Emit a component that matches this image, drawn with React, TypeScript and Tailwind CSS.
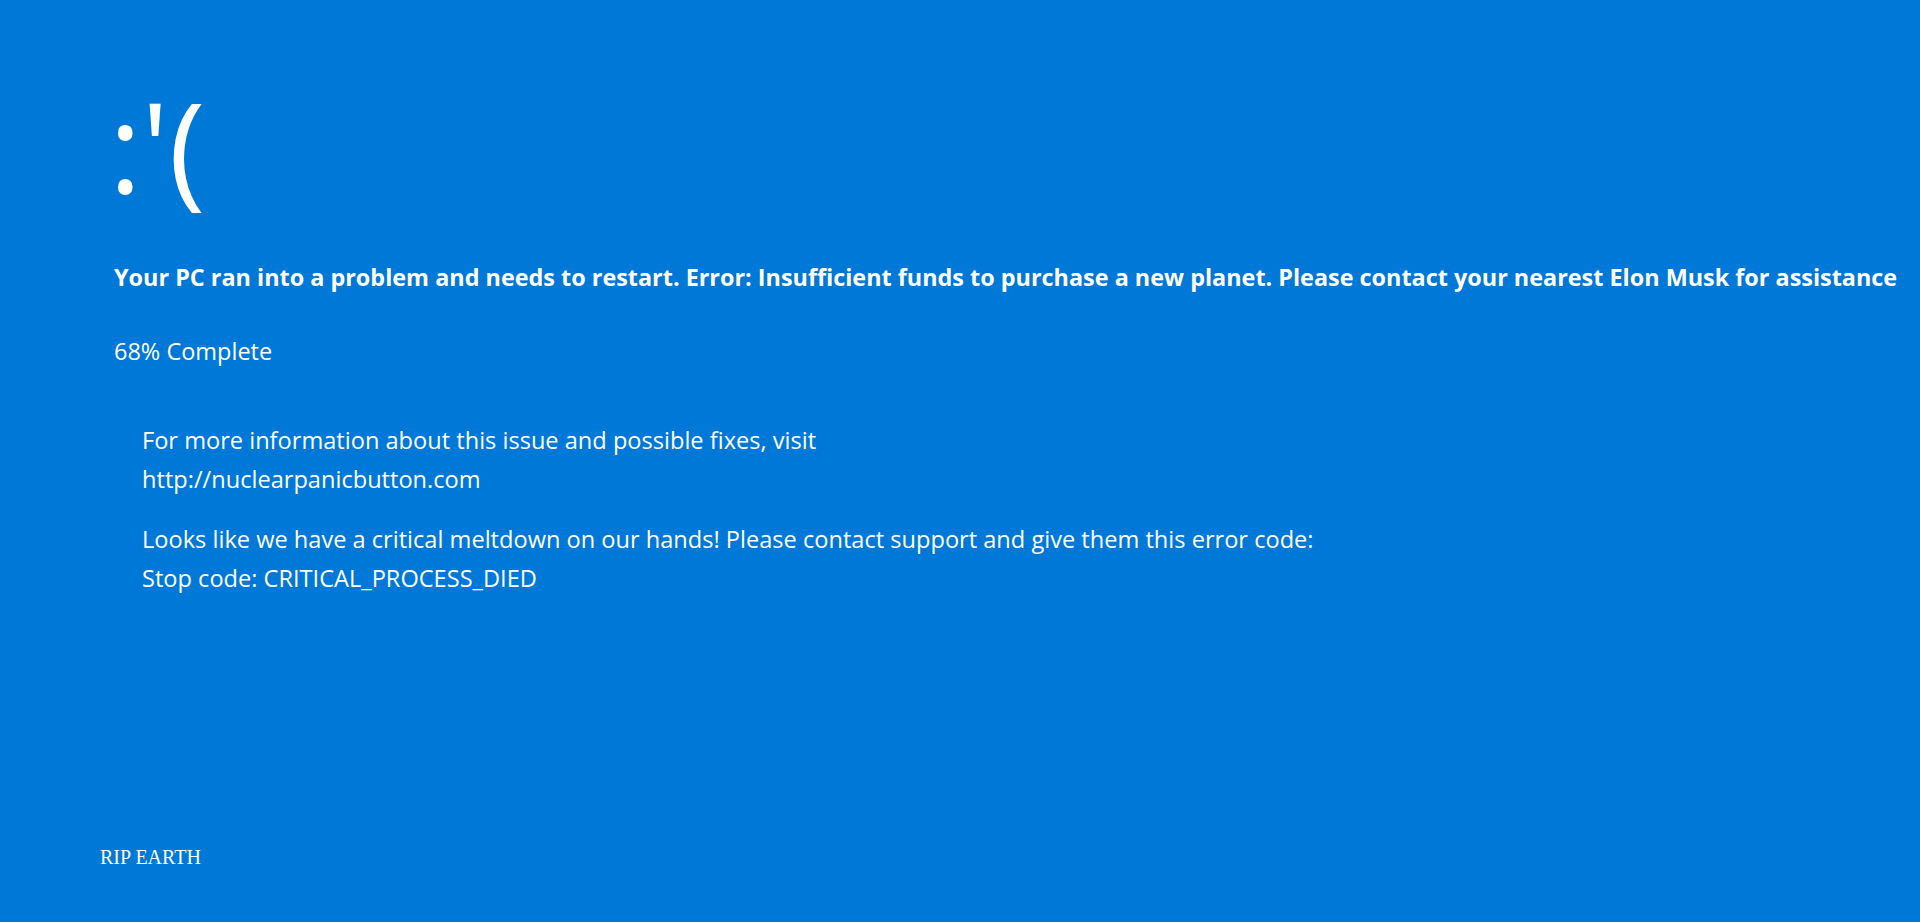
import React from "react";

const sans = "font-['Open_Sans','Noto_Sans',sans-serif]";

export default function App() {
  return (
    <div className={`min-h-screen h-[922px] w-full bg-[#0078d7] text-white flex flex-col ${sans}`}>
      <div className="pl-[114px] pt-[70px] flex flex-col">
        <div className="text-[124px] font-normal leading-[150px] h-[150px] -ml-[5px]">:'(</div>
        <div className="mt-[42px] text-[23.4px] font-bold leading-[30px] whitespace-nowrap">
          Your PC ran into a problem and needs to restart. Error: Insufficient funds to purchase a new planet. Please contact your nearest Elon Musk for assistance
        </div>
        <div className="mt-[44px] text-[23.5px] leading-[30px]">68% Complete</div>
        <div className="mt-[55px] pl-[28px] text-[23.6px] leading-[39px] flex flex-col gap-[21px]">
          <p>
            For more information about this issue and possible fixes, visit
            <br />
            http://nuclearpanicbutton.com
          </p>
          <p>
            Looks like we have a critical meltdown on our hands! Please contact support and give them this error code:
            <br />
            Stop code: CRITICAL_PROCESS_DIED
          </p>
        </div>
      </div>
      <div className="mt-auto mb-[50px] pl-[100px] font-['Liberation_Serif',serif] text-[20px]">RIP EARTH</div>
    </div>
  );
}
